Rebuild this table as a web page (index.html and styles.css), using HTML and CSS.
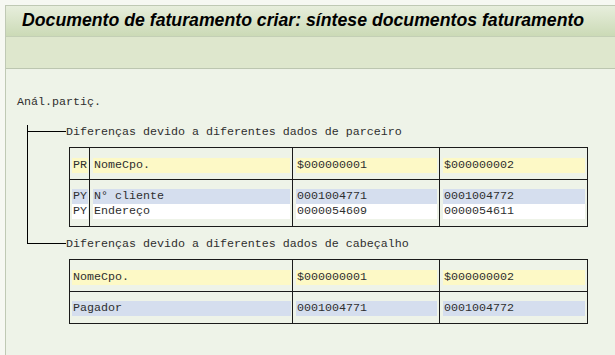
FILE: index.html
```html
<!DOCTYPE html>
<html lang="pt">
<head>
  <meta charset="UTF-8">
  <title>Documento de faturamento criar</title>
  <link rel="stylesheet" href="styles.css">
</head>
<body>

<div class="window">
  <div class="titlebar">
    <h1>Documento de faturamento criar: síntese documentos faturamento</h1>
  </div>
  <div class="toolbar"></div>

  <div class="list">
    <div class="root">Anál.partiç.</div>

    <div class="tree">
      <!-- parceiros -->
      <div class="branch">
        <div class="node">Diferenças devido a diferentes dados de parceiro</div>
        <div class="grid">
          <div class="cell first head"><span class="band yellow">PR</span></div>
          <div class="cell head"><span class="band yellow">NomeCpo.</span></div>
          <div class="cell head"><span class="band yellow">$000000001</span></div>
          <div class="cell head"><span class="band yellow">$000000002</span></div>

          <div class="cell first top"><span class="band blue">PY</span></div>
          <div class="cell top"><span class="band blue">N° cliente</span></div>
          <div class="cell top"><span class="band blue">0001004771</span></div>
          <div class="cell top"><span class="band blue">0001004772</span></div>

          <div class="cell first bottom"><span class="band white">PY</span></div>
          <div class="cell bottom"><span class="band white">Endereço</span></div>
          <div class="cell bottom"><span class="band white">0000054609</span></div>
          <div class="cell bottom"><span class="band white">0000054611</span></div>
        </div>
      </div>

      <!-- cabeçalho -->
      <div class="branch last">
        <div class="node">Diferenças devido a diferentes dados de cabeçalho</div>
        <div class="grid">
          <div class="cell first wide head"><span class="band yellow">NomeCpo.</span></div>
          <div class="cell head"><span class="band yellow">$000000001</span></div>
          <div class="cell head"><span class="band yellow">$000000002</span></div>

          <div class="cell first wide top bottom"><span class="band blue">Pagador</span></div>
          <div class="cell top bottom"><span class="band blue">0001004771</span></div>
          <div class="cell top bottom"><span class="band blue">0001004772</span></div>
        </div>
      </div>
    </div>
  </div>
</div>

</body>
</html>
```

FILE: styles.css
```css
body {
  margin: 0;
  padding: 0;
  background-color: #f6f8f2;
  font-family: "Liberation Mono", "Courier New", monospace;
  color: #2e2e2e;
}

.window {
  margin: 5px 0 0 5px;
  border-left: 1px solid #bfc9b4;
  border-top: 1px solid #bfc9b4;
  background-color: #eef3e8;
  height: 350px;
}

.titlebar {
  height: 30px;
  border-bottom: 1px solid #c3cfb5;
  background: linear-gradient(#e7eedc, #cbdab6);
}

.titlebar h1 {
  margin: 0;
  padding-left: 16px;
  font-family: "Liberation Sans", Arial, sans-serif;
  font-size: 17.7px;
  font-weight: bold;
  font-style: italic;
  line-height: 29px;
  color: #000;
  white-space: nowrap;
}

.toolbar {
  height: 31px;
  border-bottom: 1px solid #bcc6b0;
  background-color: #dee7cd;
}

.list {
  font-size: 11.67px;
  line-height: 15px;
}

.root {
  margin-top: 26px;
  padding-left: 11px;
  height: 15px;
}

.tree {
  margin-left: 21px;
  padding-top: 3px;
}

/* ramos da árvore */
.branch {
  padding-left: 38px;
  border-left: 1px solid #000;
}

.branch.last {
  border-left: none;
  padding-left: 39px;
}

.node {
  position: relative;
  margin-top: 12px;
  height: 15px;
  white-space: nowrap;
}

.node::before {
  content: "";
  position: absolute;
  left: -38px;
  top: 6px;
  width: 38px;
  border-top: 1px solid #000;
}

.branch.last .node {
  margin-top: 10px;
}

.branch.last .node::before {
  left: -39px;
  top: -10px;
  width: 38px;
  height: 16px;
  border-top: none;
  border-left: 1px solid #000;
  border-bottom: 1px solid #000;
}

/* tabela */
.grid {
  display: grid;
  grid-template-columns: 19px 203px 147px 148px;
  width: 517px;
  margin: 7px 0 0 3px;
  border: 1px solid #1a1a1a;
}

.cell {
  box-sizing: border-box;
  border-left: 1px solid #1a1a1a;
  padding: 0 2px 0 3px;
  overflow: hidden;
}

.cell.first {
  border-left: none;
  padding: 0 1px 0 2px;
}

.cell.wide {
  grid-column: span 2;
}

.cell.head {
  padding-top: 10px;
  padding-bottom: 6px;
  border-bottom: 1px solid #1a1a1a;
}

.cell.top {
  padding-top: 9px;
}

.cell.bottom {
  padding-bottom: 7px;
}

.band {
  display: block;
  height: 15px;
  padding-left: 1px;
  white-space: nowrap;
}

.yellow {
  background-color: #fdf9c6;
}

.blue {
  background-color: #d5deee;
}

.white {
  background-color: #ffffff;
}
```
